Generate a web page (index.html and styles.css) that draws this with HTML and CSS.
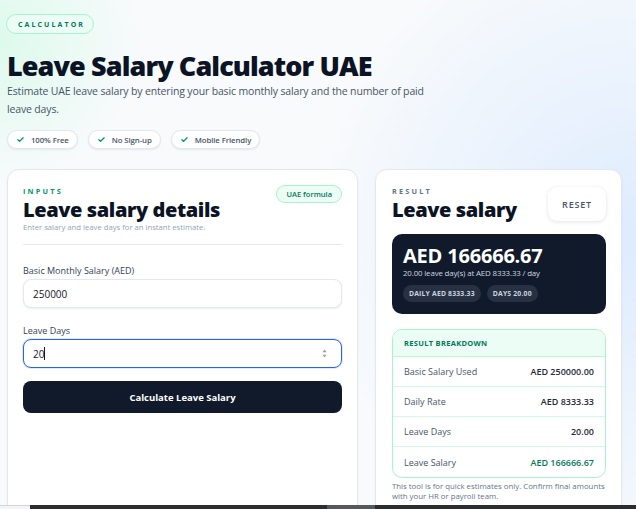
FILE: index.html
```html
<!DOCTYPE html>
<html lang="en">
<head>
<meta charset="utf-8">
<title>Leave Salary Calculator UAE</title>
<link rel="stylesheet" href="styles.css">
</head>
<body>
<div class="page">
  <header class="hero">
    <span class="eyebrow">CALCULATOR</span>
    <h1 class="title">Leave Salary Calculator UAE</h1>
    <p class="lead">Estimate UAE leave salary by entering your basic monthly salary and the number of paid leave days.</p>
    <div class="chips">
      <span class="chip"><svg class="check" viewBox="0 0 12 12"><path d="M2.5 6.3l2.3 2.2L9.5 3.8"/></svg>100% Free</span>
      <span class="chip"><svg class="check" viewBox="0 0 12 12"><path d="M2.5 6.3l2.3 2.2L9.5 3.8"/></svg>No Sign-up</span>
      <span class="chip"><svg class="check" viewBox="0 0 12 12"><path d="M2.5 6.3l2.3 2.2L9.5 3.8"/></svg>Mobile Friendly</span>
    </div>
  </header>

  <main class="grid">
    <section class="card inputs">
      <div class="card-head">
        <div>
          <div class="kicker green">INPUTS</div>
          <h2 class="card-title">Leave salary details</h2>
          <p class="hint">Enter salary and leave days for an instant estimate.</p>
        </div>
        <span class="badge">UAE formula</span>
      </div>
      <hr class="divider">
      <label class="field">
        <span class="label">Basic Monthly Salary (AED)</span>
        <span class="input">250000</span>
      </label>
      <label class="field">
        <span class="label">Leave Days</span>
        <span class="input focused"><span class="val">20<span class="caret"></span></span>
          <svg class="spin" viewBox="0 0 8 12"><path d="M4 1.5L6.5 4.5H1.5z"/><path d="M4 10.5L6.5 7.5H1.5z"/></svg>
        </span>
      </label>
      <button class="calc" type="button">Calculate Leave Salary</button>
    </section>

    <section class="card result">
      <div class="result-head">
        <div>
          <div class="kicker gray">RESULT</div>
          <h2 class="card-title">Leave salary</h2>
        </div>
        <button class="reset" type="button">RESET</button>
      </div>
      <div class="total">
        <div class="amount">AED 166666.67</div>
        <div class="sub">20.00 leave day(s) at AED 8333.33 / day</div>
        <div class="pills">
          <span class="pill">DAILY AED 8333.33</span>
          <span class="pill">DAYS 20.00</span>
        </div>
      </div>
      <div class="breakdown">
        <div class="bd-head">RESULT BREAKDOWN</div>
        <div class="row"><span>Basic Salary Used</span><b>AED 250000.00</b></div>
        <div class="row"><span>Daily Rate</span><b>AED 8333.33</b></div>
        <div class="row"><span>Leave Days</span><b>20.00</b></div>
        <div class="row"><span>Leave Salary</span><b class="pos">AED 166666.67</b></div>
      </div>
      <p class="note">This tool is for quick estimates only. Confirm final amounts with your HR or payroll team.</p>
    </section>
  </main>
</div>
<div class="bottom-bar"><span class="thumb"></span></div>
</body>
</html>
```

FILE: styles.css
```css
* { box-sizing: border-box; }
html, body { margin: 0; padding: 0; }
body {
  font-family: "Open Sans", "Noto Sans", sans-serif;
  color: #0f172a;
  background:
    radial-gradient(circle at 0% 8%, rgba(209, 250, 229, 0.7) 0, rgba(209,250,229,0) 140px),
    radial-gradient(circle at 100% 45%, rgba(219, 234, 254, 0.9) 0, rgba(219,234,254,0) 320px),
    #f8fafc;
  min-height: 509px;
  overflow: hidden;
}
.page { padding: 14px 14px 0 7px; }

.hero { display: flex; flex-direction: column; align-items: flex-start; }
.eyebrow {
  display: inline-flex; align-items: center; height: 20px;
  padding: 0 8px 0 11px; margin-left: -1px;
  border: 1px solid #a7f3d0; border-radius: 999px; background: #ecfdf5;
  color: #047857; font-size: 7px; font-weight: 700; letter-spacing: 2.1px;
}
.title {
  margin: 15px 0 0; font-size: 27px; line-height: 33px; font-weight: 800;
  letter-spacing: -0.9px; color: #0b1324;
}
.lead {
  margin: 0; max-width: 432px; font-size: 10.5px; line-height: 18px; color: #475569;
  letter-spacing: -0.15px;
}
.chips { display: flex; gap: 10px; margin-top: 12px; }
.chip {
  display: inline-flex; align-items: center; gap: 6px; height: 19px; padding: 0 8px 0 8px;
  background: #fff; border: 1px solid #e2e8f0; border-radius: 999px;
  box-shadow: 0 1px 2px rgba(15, 23, 42, 0.08);
  font-size: 7.8px; font-weight: 600; color: #475569; letter-spacing: -0.1px;
}
.check { width: 9px; height: 9px; fill: none; stroke: #059669; stroke-width: 1.8; stroke-linecap: round; stroke-linejoin: round; }

.grid { display: grid; grid-template-columns: 351px 247px; gap: 17px; margin-top: 20px; }
.card {
  background: #fff; border: 1px solid #e2e8f0; border-radius: 12px;
  box-shadow: 0 1px 3px rgba(15, 23, 42, 0.04);
  min-height: 360px;
}
.inputs { padding: 16px 15px 0 15px; }
.card-head { display: flex; justify-content: space-between; align-items: flex-start; }
.kicker { font-size: 7.3px; font-weight: 700; letter-spacing: 2.2px; line-height: 10px; }
.kicker.green { color: #059669; }
.kicker.gray { color: #64748b; }
.card-title { margin: 1px 0 0; font-size: 20px; line-height: 25px; font-weight: 800; letter-spacing: -0.4px; color: #0b1324; }
.hint { margin: 0; font-size: 7.7px; line-height: 10px; color: #94a3b8; }
.badge {
  margin-top: -1px; display: inline-flex; align-items: center; height: 18px; padding: 0 9px;
  border: 1px solid #a7f3d0; background: #ecfdf5; border-radius: 999px;
  color: #047857; font-size: 7.5px; font-weight: 600;
}
.divider { border: 0; border-top: 1px solid #e5e7eb; margin: 12px 0 20px; }
.field { display: flex; flex-direction: column; }
.field + .field { margin-top: 17px; }
.label { font-size: 9px; line-height: 12px; color: #334155; margin-bottom: 2px; }
.input {
  display: flex; align-items: center; justify-content: space-between; height: 29px;
  padding: 0 9px; border: 1px solid #e2e8f0; border-radius: 8px; background: #fff;
  box-shadow: 0 1px 2px rgba(15, 23, 42, 0.08);
  font-size: 10px; color: #0f172a;
}
.input.focused { border: 1.5px solid #2563eb; box-shadow: 0 0 0 1px rgba(37, 99, 235, 0.15); }
.val { display: inline-flex; align-items: center; }
.caret { display: inline-block; width: 1px; height: 13px; background: #0f172a; margin-left: 0; }
.spin { width: 7px; height: 11px; fill: #9ca3af; margin-right: 4px; }
.calc {
  display: block; width: 100%; height: 32px; margin-top: 13px; border: 0; border-radius: 8px;
  background: #111a2b; color: #fff; font-family: inherit; font-size: 9.5px; font-weight: 700;
}

.result { padding: 16px 15px 0 16px; }
.result-head { display: flex; justify-content: space-between; align-items: flex-start; }
.reset {
  margin-top: 1px; height: 34px; width: 58px; border: 0; border-radius: 9px; background: #fff;
  box-shadow: 0 1px 4px rgba(15, 23, 42, 0.12);
  font-family: inherit; font-size: 9px; font-weight: 600; letter-spacing: 0.8px; color: #475569;
}
.total {
  margin-top: 12px; background: #111a2b; border-radius: 10px; padding: 10px 11px 12px;
  color: #fff;
}
.amount { font-size: 20px; line-height: 24px; font-weight: 700; letter-spacing: -0.2px; }
.sub { font-size: 7.9px; line-height: 10px; color: #cbd5e1; letter-spacing: -0.15px; }
.pills { display: flex; gap: 6px; margin-top: 7px; }
.pill {
  display: inline-flex; align-items: center; height: 17px; padding: 0 6px;
  background: #273142; border-radius: 999px; font-size: 6.8px; font-weight: 700; color: #cbd5e1;
  letter-spacing: 0.2px;
}
.breakdown {
  margin-top: 15px; border: 1px solid #a7f3d0; border-radius: 10px; overflow: hidden;
}
.bd-head {
  height: 27px; display: flex; align-items: center; padding: 0 11px;
  background: #ecfdf5; border-bottom: 1px solid #bbf7d0;
  color: #047857; font-size: 7.5px; font-weight: 700; letter-spacing: 0.3px;
}
.row {
  display: flex; justify-content: space-between; align-items: center; height: 30px;
  padding: 0 11px; border-bottom: 1px solid #d1fae5; font-size: 9px;
}
.row:last-child { border-bottom: 0; }
.row span { color: #475569; }
.row b { font-weight: 600; color: #1e293b; }
.row b.pos { color: #047857; }
.note { margin: 3px 0 0; font-size: 7.8px; line-height: 10px; color: #64748b; }

.bottom-bar {
  position: fixed; left: 0; right: 0; bottom: 0; height: 4px; background: #f1f5f9;
  border-top: 1px solid #d1d5db;
}
.bottom-bar::before {
  content: ""; position: absolute; left: 30px; right: 0; top: -1px; bottom: 0; background: #2b2d31;
}
.thumb { position: absolute; left: 327px; width: 48px; top: -1px; bottom: 0; background: #55585d; }
```
